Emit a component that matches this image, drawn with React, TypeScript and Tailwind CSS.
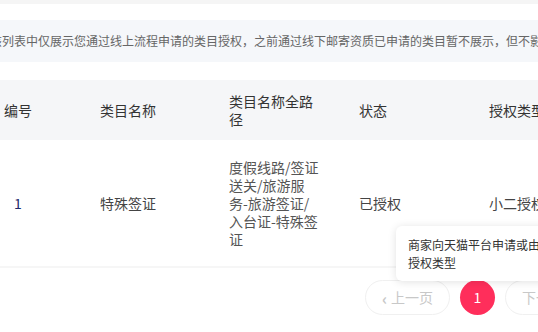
import React from 'react';

const font = { fontFamily: '"Noto Sans CJK SC", "Liberation Sans", sans-serif' };

const pathLines = ['度假线路/签证', '送关/旅游服', '务-旅游签证/', '入台证-特殊签', '证'];

const App: React.FC = () => {
	return (
		<div className="relative w-[538px] h-[332px] overflow-hidden bg-white" style={font}>
			<div className="h-[4px] bg-[#f5f5f5]" />
			<div className="w-[700px] pt-[16px]">
				{/* notice */}
				<div className="h-[42px] bg-[#f5f7fa] flex items-center">
					<p className="ml-[-10px] whitespace-nowrap text-[12px] text-[#666]">
						该列表中仅展示您通过线上流程申请的类目授权，之前通过线下邮寄资质已申请的类目暂不展示，但不影响您的正常经营。
					</p>
				</div>

				{/* table */}
				<div className="mt-[18px]">
					<div className="h-[60px] bg-[#f5f6f8] flex items-center text-[14px] leading-[18px] text-[#333]">
						<div className="w-[100px] pl-[4px]">编号</div>
						<div className="w-[129px]">类目名称</div>
						<div className="w-[130px]">
							<div>类目名称全路</div>
							<div>径</div>
						</div>
						<div className="w-[130px]">状态</div>
						<div className="w-[130px]">授权类型</div>
					</div>
					<div className="h-[126px] flex items-center text-[14px] leading-[18px] text-[#444]">
						<div className="w-[100px] pl-[14px] text-[#1d2a6b]">1</div>
						<div className="w-[129px]">特殊签证</div>
						<div className="w-[130px] text-[#555]">
							{pathLines.map((l) => (
								<div key={l}>{l}</div>
							))}
						</div>
						<div className="w-[130px]">已授权</div>
						<div className="w-[130px]">小二授权</div>
					</div>
					<div className="h-[2px] bg-[#f6f6f6]" />
				</div>

				{/* pagination */}
				<div className="mt-[12px] flex items-center gap-[10px] pl-[365px]">
					<button className="w-[85px] h-[35px] rounded-full border border-[#f0f0f0] flex items-center justify-center gap-[4px] text-[14px] text-[#c8c8c8]">
						<span className="text-[16px] leading-none font-bold">‹</span>
						<span>上一页</span>
					</button>
					<button className="w-[35px] h-[35px] rounded-full bg-[#ff2e5b] text-white text-[14px] flex items-center justify-center">1</button>
					<button className="w-[85px] h-[35px] rounded-full border border-[#f0f0f0] flex items-center justify-center gap-[4px] text-[14px] text-[#c8c8c8]">
						<span>下一页</span>
						<span className="text-[16px] leading-none font-bold">›</span>
					</button>
				</div>
			</div>

			{/* tooltip */}
			<div className="absolute left-[396px] top-[226px] w-[260px] h-[55px] bg-white rounded-[6px] shadow-[0_1px_8px_rgba(0,0,0,0.12)] px-[12px] pt-[10px] text-[12px] leading-[18px] text-[#333]">
				<div className="whitespace-nowrap">商家向天猫平台申请或由小二主动发起的</div>
				<div>授权类型</div>
			</div>
		</div>
	);
};

export default App;
